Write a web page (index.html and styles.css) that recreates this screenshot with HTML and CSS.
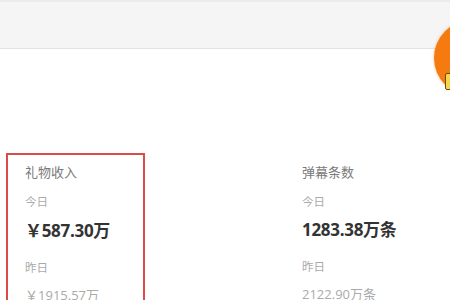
FILE: index.html
```html
<!DOCTYPE html>
<html lang="zh-CN">
<head>
  <meta charset="UTF-8" />
  <meta name="viewport" content="width=device-width, initial-scale=1.0"/>
  <title>直播数据</title>
  <link rel="stylesheet" href="styles.css">
</head>
<body>

  <!-- Top bar -->
  <div class="top-bar"></div>

  <!-- Floating avatar bubble -->
  <div class="float-ball">
    <span class="ball-badge"></span>
  </div>

  <!-- Stats -->
  <div class="stats">
    <div class="stat-card active">
      <div class="stat-title">礼物收入</div>
      <div class="stat-label">今日</div>
      <div class="stat-value"><span class="yen">￥</span>587.30万</div>
      <div class="stat-label last">昨日</div>
      <div class="stat-prev"><span class="yen">￥</span>1915.57万</div>
    </div>

    <div class="stat-card">
      <div class="stat-title">弹幕条数</div>
      <div class="stat-label">今日</div>
      <div class="stat-value">1283.38万条</div>
      <div class="stat-label last">昨日</div>
      <div class="stat-prev">2122.90万条</div>
    </div>
  </div>

</body>
</html>
```

FILE: styles.css
```css
/* Basic Reset & Font */
* {
  box-sizing: border-box;
  margin: 0;
  padding: 0;
}

body {
  font-family: 'Open Sans', 'Noto Sans CJK SC', sans-serif;
  background: #fff;
  color: #333;
  overflow: hidden;
}

/* Top Bar */
.top-bar {
  height: 49px;
  background: #f5f5f5;
  border-top: 2px solid #ebebeb;
  border-bottom: 1px solid #e3e3e3;
}

/* Orange floating ball on the right edge */
.float-ball {
  position: absolute;
  left: 434px;
  top: 20px;
  width: 76px;
  height: 76px;
  border-radius: 50%;
  background: #f57a10;
  box-shadow: 0 0 3px rgba(245, 122, 16, 0.5);
}

.ball-badge {
  position: absolute;
  left: 11px;
  top: 53px;
  width: 10px;
  height: 17px;
  background: #f5d54a;
  border: 1px solid #6b4a14;
  border-radius: 2px;
}

/* Stats Grid */
.stats {
  display: grid;
  grid-template-columns: 139px 139px;
  column-gap: 138px;
  padding: 104px 0 0 6px;
}

.stat-card {
  border: 2px solid transparent;
  border-bottom: none;
  padding: 7px 0 0 17px;
  height: 160px;
}

.stat-card.active {
  border-color: #dc4a4a;
}

.stat-title {
  font-size: 13px;
  line-height: 20px;
  color: #7a7a7a;
}

.stat-label {
  margin-top: 11px;
  font-size: 11.5px;
  line-height: 18px;
  color: #aaa;
}

.stat-label.last {
  margin-top: 15px;
}

.stat-value {
  margin-top: 6px;
  font-size: 17px;
  line-height: 26px;
  font-weight: bold;
  color: #333;
  white-space: nowrap;
  letter-spacing: -0.3px;
}

.stat-prev {
  margin-top: 8px;
  font-size: 13px;
  line-height: 20px;
  color: #aaa;
  white-space: nowrap;
}

/* Full-width yen sign */
.yen {
  font-family: 'Noto Sans CJK SC', sans-serif;
}
```
